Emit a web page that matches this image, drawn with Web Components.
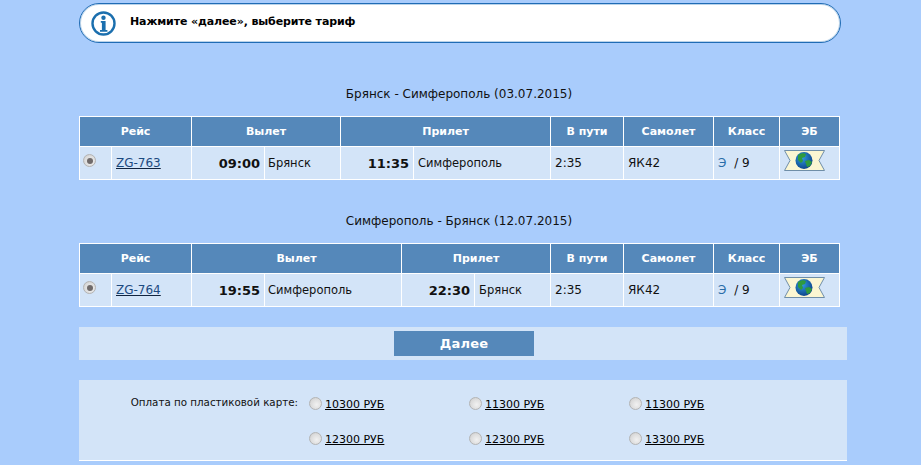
<!DOCTYPE html>
<html lang="ru">
<head>
<meta charset="utf-8">
<title>Выбор тарифа</title>
<style>
html, body { margin: 0; height: 100%; overflow: hidden; background: #a9ccfc; }
body { font: 12px "DejaVu Sans", Verdana, sans-serif; color: #111; }
</style>
</head>
<body>
<booking-page>
  <info-notice>Нажмите «далее», выберите тариф</info-notice>
  <flight-table route="Брянск - Симферополь (03.07.2015)" top="43" flight="ZG-763" dep="09:00" from="Брянск" arr="11:35" to="Симферополь" widths="32,80,73,76,73,137,73,90,66,60"></flight-table>
  <flight-table route="Симферополь - Брянск (12.07.2015)" top="33" flight="ZG-764" dep="19:55" from="Симферополь" arr="22:30" to="Брянск" widths="32,80,73,137,73,76,73,90,66,60"></flight-table>
  <next-bar>Далее</next-bar>
  <fare-panel label="Оплата по пластиковой карте:" fares="10300,11300,11300,12300,12300,13300"></fare-panel>
</booking-page>

<script>
class BookingPage extends HTMLElement {
    constructor() {
        super();
        this.attachShadow({mode: 'open'});
        this.shadowRoot.innerHTML = `
<style>
:host{ display: block; width: 768px; margin-left: 79px; padding-top: 3px; }
</style>
<slot></slot>`;
    }
}

class InfoNotice extends HTMLElement {
    constructor() {
        super();
        this.attachShadow({mode: 'open'});
        this.shadowRoot.innerHTML = `
<style>
:host{
    display: flex;
    align-items: center;
    gap: 14px;
    box-sizing: border-box;
    width: 762px;
    height: 40px;
    padding: 0 0 3px 11px;
    background: #fff;
    border: 1px solid #1f6cb5;
    border-radius: 20px;
    box-shadow: inset 0 0 0 1px rgba(31,108,181,.3);
    font-size: 11px;
    font-weight: bold;
    letter-spacing: -.12px;
    color: #000;
}
svg{ display: block; flex: none; margin-top: 3px; }
</style>
<svg width="25" height="25" viewBox="0 0 25 25">
  <circle cx="12.5" cy="12.5" r="11" fill="#fff" stroke="#1b6fae" stroke-width="2.4"/>
  <circle cx="12.5" cy="6.8" r="2.2" fill="#1b6fae"/>
  <path d="M9.8 10h4.8v9h1.8v1.7H9v-1.7h1.9v-7.3H9.8z" fill="#1b6fae"/>
</svg>
<span><slot></slot></span>`;
    }
}

class OldRadio extends HTMLElement {
    constructor() {
        super();
        this.attachShadow({mode: 'open'});
        this.shadowRoot.innerHTML = `
<style>
:host{
    display: inline-block;
    box-sizing: border-box;
    width: 13px;
    height: 13px;
    border-radius: 50%;
    border: 1px solid #b4b4b4;
    background: radial-gradient(circle at 60% 60%, #f1f1f1 0, #dcdcdc 60%, #c4c4c4 100%);
    position: relative;
    vertical-align: middle;
}
:host([checked])::after{
    content: '';
    position: absolute;
    left: 2.5px;
    top: 2.5px;
    width: 6px;
    height: 6px;
    border-radius: 50%;
    background: #6f6a6a;
}
</style>`;
    }
}

class TicketIcon extends HTMLElement {
    constructor() {
        super();
        this.attachShadow({mode: 'open'});
        this.shadowRoot.innerHTML = `
<style>
:host{ display: block; width: 41px; height: 21px; }
svg{ display: block; }
</style>
<svg width="41" height="21" viewBox="0 0 41 21">
  <defs>
    <radialGradient id="sea" cx="0.4" cy="0.35" r="0.7">
      <stop offset="0" stop-color="#2f9be0"/>
      <stop offset="1" stop-color="#0b3f86"/>
    </radialGradient>
  </defs>
  <path d="M.5 .5H40.5L35 10.5 40.5 20.5H.5L6 10.5z" fill="#fbf6d2" stroke="#6f8ea8"/>
  <circle cx="20" cy="10.5" r="8.5" fill="url(#sea)"/>
  <path d="M14 5c3-2 6-2.500 8-1l-1 3-3 1 1 3-2 2-3-3zM21 11l4-1 3 2-2 4-3 1-1-3z" fill="#2f9a3f"/>
</svg>`;
    }
}

const flightTemplate = document.createElement('template');
flightTemplate.innerHTML = `
<style>
:host{ display: block; }
.route{
    width: 760px;
    height: 16px;
    line-height: 16px;
    text-align: center;
    color: #111;
}
table{
    margin-top: 14px;
    width: 761px;
    table-layout: fixed;
    border-collapse: collapse;
    border: 1px solid #fff;
}
th, td{
    box-sizing: border-box;
    border: 1px solid #fff;
    padding: 0 4px;
    overflow: hidden;
    white-space: nowrap;
}
th{
    height: 30px;
    background: #5588ba;
    color: #fff;
    font-size: 11px;
    font-weight: bold;
    text-align: center;
}
td{
    height: 33px;
    background: #d3e4f8;
    color: #111;
}
.pick{ padding: 0 0 6px 3px; }
.time{ text-align: right; font-size: 13px; font-weight: bold; }
.from, .to{ font-size: 11.5px; }
.from{ padding-left: 3px; }
a{ color: #1c4a80; text-decoration: underline; text-decoration-color: #10233f; }
.eb{ color: #2a6ea8; margin-right: 4px; }
.ticket{ padding: 0 0 6px 4px; }
</style>
<div class="route"></div>
<table>
  <colgroup></colgroup>
  <tr>
    <th colspan="2">Рейс</th>
    <th colspan="2">Вылет</th>
    <th colspan="2">Прилет</th>
    <th>В пути</th>
    <th>Самолет</th>
    <th>Класс</th>
    <th>ЭБ</th>
  </tr>
  <tr>
    <td class="pick"><old-radio checked></old-radio></td>
    <td><a href="#" class="flight"></a></td>
    <td class="time dep"></td>
    <td class="from"></td>
    <td class="time arr"></td>
    <td class="to"></td>
    <td>2:35</td>
    <td>ЯК42</td>
    <td><span class="eb">Э</span> / 9</td>
    <td class="ticket"><ticket-icon></ticket-icon></td>
  </tr>
</table>`;

class FlightTable extends HTMLElement {
    constructor() {
        super();
        this.attachShadow({mode: 'open'});
        this.shadowRoot.appendChild(flightTemplate.content.cloneNode(true));
    }

    connectedCallback() {
        const root = this.shadowRoot;
        this.style.marginTop = this.getAttribute('top') + 'px';
        root.querySelector('.route').textContent = this.getAttribute('route');
        root.querySelector('.flight').textContent = this.getAttribute('flight');
        root.querySelector('.dep').textContent = this.getAttribute('dep');
        root.querySelector('.from').textContent = this.getAttribute('from');
        root.querySelector('.arr').textContent = this.getAttribute('arr');
        root.querySelector('.to').textContent = this.getAttribute('to');
        const cols = root.querySelector('colgroup');
        this.getAttribute('widths').split(',').forEach(w => {
            const col = document.createElement('col');
            col.style.width = w + 'px';
            cols.appendChild(col);
        });
    }
}

class NextBar extends HTMLElement {
    constructor() {
        super();
        this.attachShadow({mode: 'open'});
        this.shadowRoot.innerHTML = `
<style>
:host{
    display: flex;
    justify-content: center;
    align-items: center;
    height: 33px;
    margin-top: 20px;
    padding-left: 2px;
    background: #d3e4f8;
}
button{
    width: 140px;
    height: 25px;
    margin: 0;
    padding: 0;
    border: 0;
    background: #5588ba;
    color: #fff;
    font: bold 13px "DejaVu Sans", Verdana, sans-serif;
    letter-spacing: .2px;
}
</style>
<button><slot></slot></button>`;
    }
}

class FarePanel extends HTMLElement {
    constructor() {
        super();
        this.attachShadow({mode: 'open'});
        this.shadowRoot.innerHTML = `
<style>
:host{
    display: grid;
    grid-template-columns: 230px 160px 160px 1fr;
    grid-auto-rows: 35px;
    box-sizing: border-box;
    height: 81px;
    margin-top: 20px;
    padding-top: 10px;
    background: #d3e4f8;
    border-bottom: 1px solid #fff;
    font-size: 11px;
    color: #111;
}
.label{ grid-row: 1; grid-column: 1; text-align: right; padding: 5px 0 0 0; font-size: 10.3px; line-height: 14px; margin-right: 11px; }
.fare{ display: flex; align-items: flex-start; gap: 3px; padding-top: 5px; }
.fare span{ text-decoration: underline; line-height: 16px; margin-top: 2px; color: #000; }
.pad{ grid-column: 1; }
old-radio{ margin-top: 2px; }
</style>
<div class="label"></div>`;
    }

    connectedCallback() {
        const root = this.shadowRoot;
        root.querySelector('.label').textContent = this.getAttribute('label');
        this.getAttribute('fares').split(',').forEach((price, i) => {
            if (i % 3 === 0 && i > 0) {
                const pad = document.createElement('div');
                pad.className = 'pad';
                root.appendChild(pad);
            }
            const fare = document.createElement('div');
            fare.className = 'fare';
            fare.innerHTML = '<old-radio></old-radio><span>' + price + ' РУБ</span>';
            if (i % 3 === 0) fare.style.gridColumn = 2;
            root.appendChild(fare);
        });
    }
}

customElements.define('booking-page', BookingPage);
customElements.define('info-notice', InfoNotice);
customElements.define('old-radio', OldRadio);
customElements.define('ticket-icon', TicketIcon);
customElements.define('flight-table', FlightTable);
customElements.define('next-bar', NextBar);
customElements.define('fare-panel', FarePanel);
</script>
</body>
</html>
